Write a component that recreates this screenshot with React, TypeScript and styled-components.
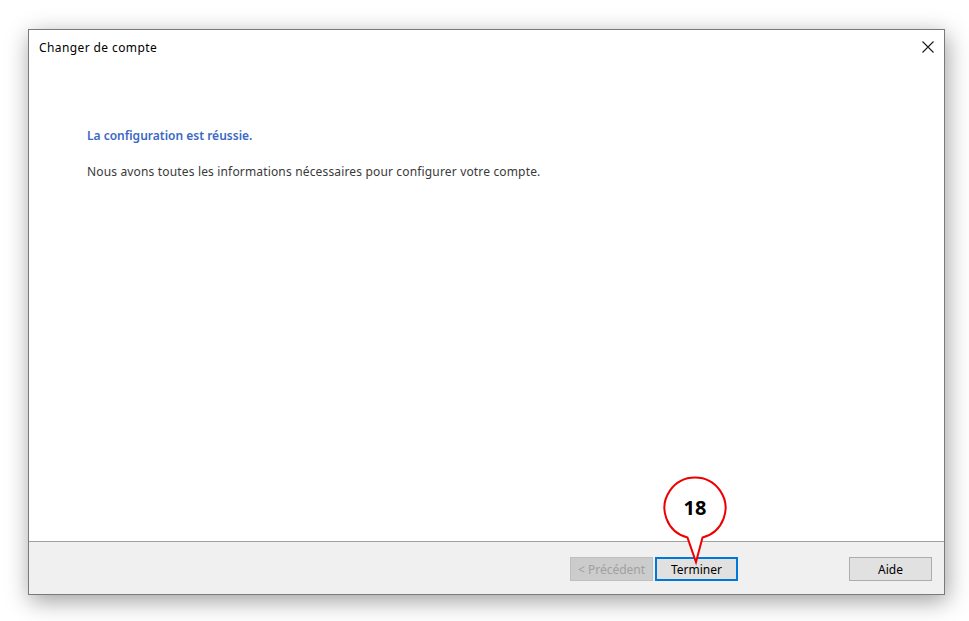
import React from "react";
import styled, { createGlobalStyle } from "styled-components";

const Global = createGlobalStyle`
  html, body { margin: 0; padding: 0; background: #ffffff; }
  body { font-family: "Noto Sans", "Segoe UI", "Liberation Sans", sans-serif; }
`;

const Page = styled.div`
  padding: 29px 25px 27px 28px;
  width: 969px;
  height: 621px;
  box-sizing: border-box;
  background: #ffffff;
`;

const Window = styled.div`
  width: 915px;
  height: 564px;
  border: 1px solid #7a7a7a;
  background: #ffffff;
  box-shadow: 2px 6px 22px rgba(0, 0, 0, 0.38);
  display: flex;
  flex-direction: column;
`;

const TitleBar = styled.div`
  height: 34px;
  display: flex;
  align-items: center;
  justify-content: space-between;
  padding: 0 0 0 10px;
`;

const Title = styled.div`
  font-size: 12px;
  color: #000000;
  letter-spacing: 0.4px;
`;

const CloseButton = styled.button`
  width: 34px;
  height: 34px;
  border: none;
  background: transparent;
  display: flex;
  align-items: center;
  justify-content: center;
  padding: 0;
  margin-right: -1px;
`;

const Content = styled.div`
  flex: 1;
  padding: 64px 0 0 58px;
  display: flex;
  flex-direction: column;
  gap: 20px;
`;

const Heading = styled.div`
  font-size: 12px;
  font-weight: 600;
  line-height: 16px;
  color: #3b68c4;
`;

const Message = styled.div`
  font-size: 12px;
  line-height: 16px;
  color: #3a3a3a;
  letter-spacing: 0.16px;
`;

const Footer = styled.div`
  height: 53px;
  border-top: 1px solid #a0a0a0;
  background: #f0f0f0;
  display: flex;
  align-items: flex-start;
  padding: 15px 12px 0 0;
  box-sizing: border-box;
`;

const ButtonGroup = styled.div`
  margin-left: auto;
  display: flex;
  gap: 2px;
`;

const Spacer = styled.div`
  width: 111px;
`;

const Button = styled.button<{ $variant?: "default" | "disabled" | "primary" }>`
  position: relative;
  width: 83px;
  height: 24px;
  box-sizing: border-box;
  font-family: "Noto Sans", "Segoe UI", "Liberation Sans", sans-serif;
  font-size: 12px;
  padding: 0;
  cursor: default;
  color: ${(p) => (p.$variant === "disabled" ? "#a0a0a0" : "#000000")};
  background: ${(p) => (p.$variant === "disabled" ? "#cccccc" : "#e1e1e1")};
  border: ${(p) =>
    p.$variant === "primary"
      ? "2px solid #0078d7"
      : p.$variant === "disabled"
      ? "1px solid #bfbfbf"
      : "1px solid #adadad"};
`;

const Callout = styled.svg`
  position: absolute;
  left: 6px;
  top: -83px;
  overflow: visible;
  pointer-events: none;
`;

const CalloutLabel = styled.text`
  font-family: "Noto Sans", "Liberation Sans", sans-serif;
  font-weight: 700;
  font-size: 20px;
  fill: #000000;
`;

export default function App() {
  return (
    <>
      <Global />
      <Page>
        <Window>
          <TitleBar>
            <Title>Changer de compte</Title>
            <CloseButton aria-label="Fermer">
              <svg width="12" height="12" viewBox="0 0 12 12">
                <path d="M0.5 0.5 L11.5 11.5 M11.5 0.5 L0.5 11.5" stroke="#1a1a1a" strokeWidth="1.1" fill="none" />
              </svg>
            </CloseButton>
          </TitleBar>
          <Content>
            <Heading>La configuration est réussie.</Heading>
            <Message>Nous avons toutes les informations nécessaires pour configurer votre compte.</Message>
          </Content>
          <Footer>
            <ButtonGroup>
              <Button $variant="disabled" disabled>
                &lt; Précédent
              </Button>
              <Button $variant="primary">
                Terminer
                <Callout width="64" height="90" viewBox="0 0 64 90">
                  <path
                    d="M24.5 61.56 A30.5 30.5 0 1 1 39.5 61.56 L33 86 Z"
                    fill="#ffffff"
                    stroke="#ee0000"
                    strokeWidth="2"
                    strokeLinejoin="miter"
                  />
                  <CalloutLabel x="32" y="39" textAnchor="middle">
                    18
                  </CalloutLabel>
                </Callout>
              </Button>
            </ButtonGroup>
            <Spacer />
            <Button>Aide</Button>
          </Footer>
        </Window>
      </Page>
    </>
  );
}
